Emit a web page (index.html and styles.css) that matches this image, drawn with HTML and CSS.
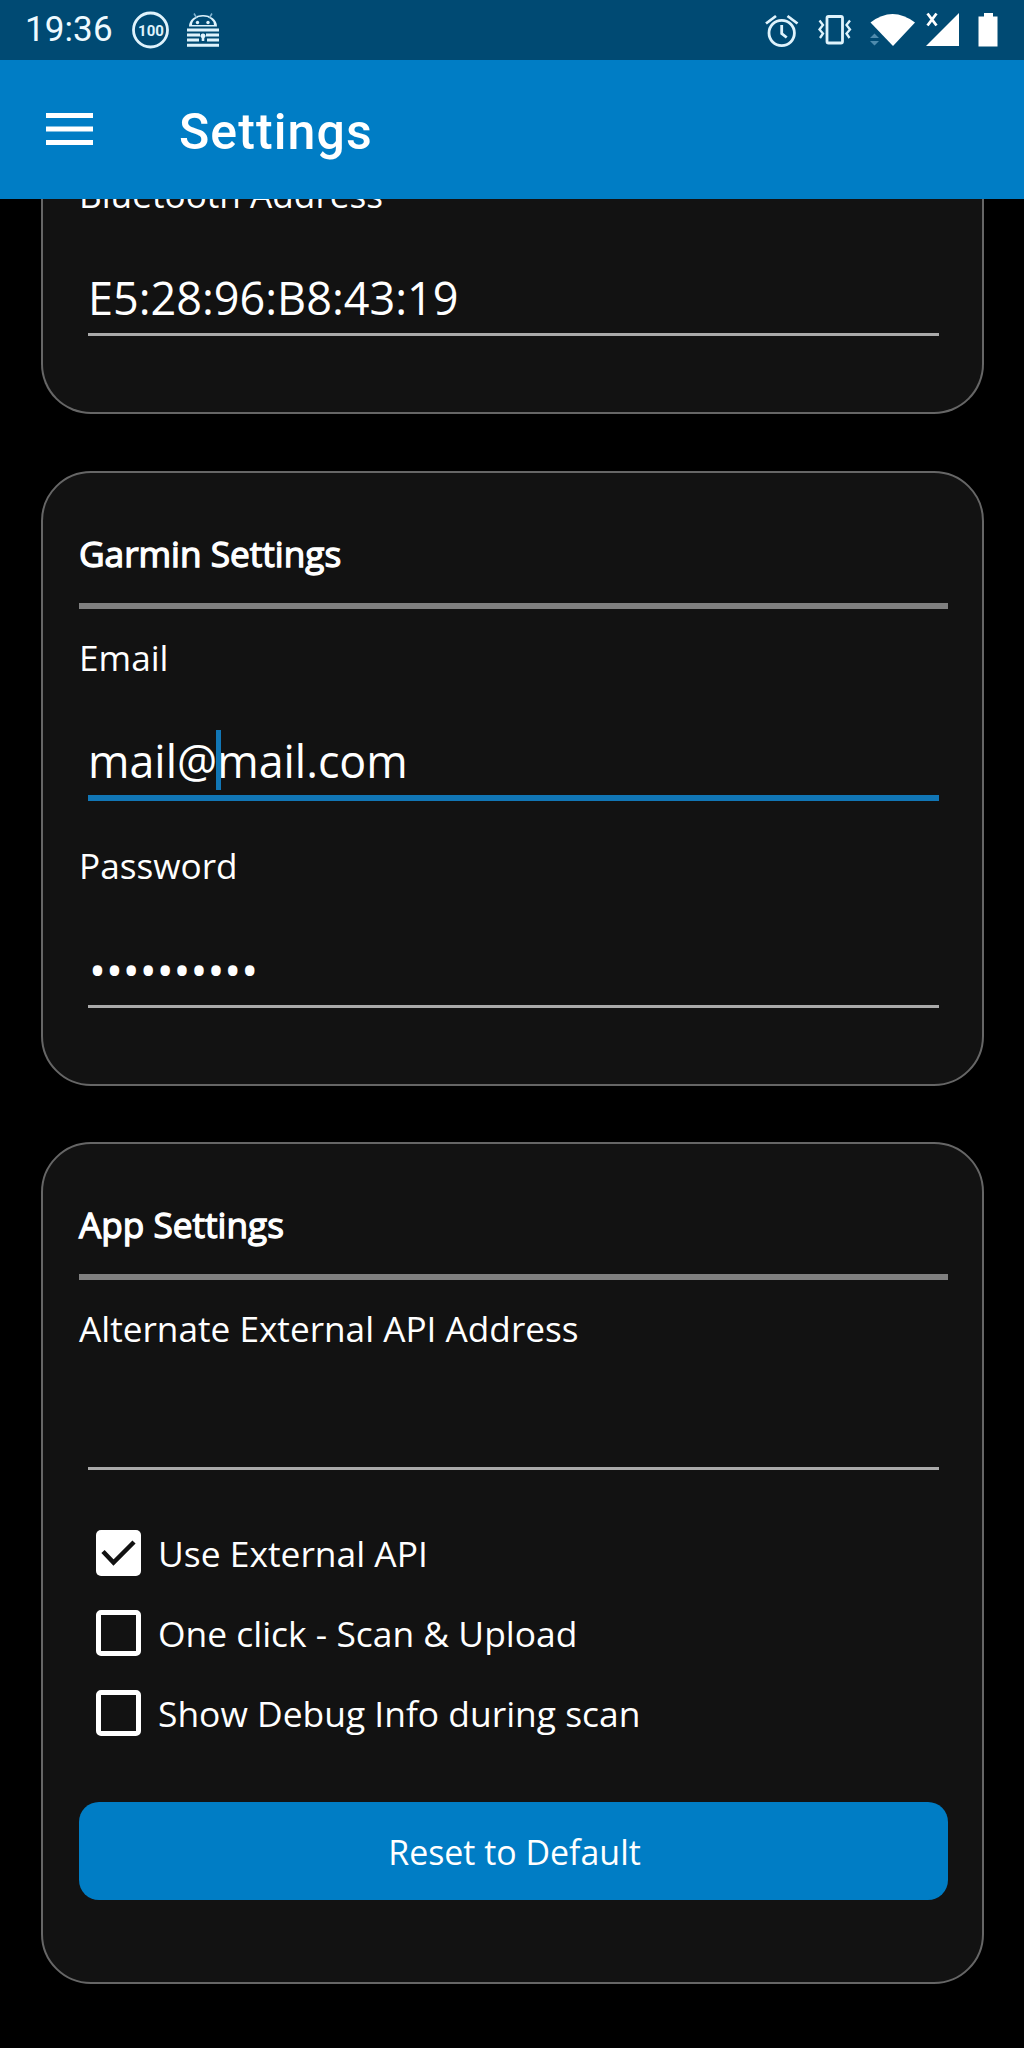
FILE: index.html
```html
<!DOCTYPE html>
<html lang="en">
<head>
<meta charset="utf-8">
<title>Settings</title>
<link rel="stylesheet" href="styles.css">
</head>
<body>
<div class="statusbar">
  <span class="clock">19:36</span>
  <svg class="status-left" width="100" height="60" viewBox="125 0 100 60">
    <circle cx="150.500" cy="30" r="17" fill="none" stroke="#dff3fc" stroke-width="2.800"/>
    <text class="level" x="151" y="35.500" text-anchor="middle">100</text>
    <g fill="#dff3fc">
      <path fill-rule="evenodd" d="M189 26.500a14 11.500 0 0 1 28 0zM192 25h22a11 8.500 0 0 0-22 0z"/>
      <circle cx="197.500" cy="22.500" r="1.700"/><circle cx="208" cy="22.500" r="1.700"/>
      <path d="M187 28.500h32v3h-32zM187 33.500h13v3h-13zM206 33.500h13v3h-13zM187 38.500h12v3h-12zM207 38.500h12v3h-12zM187 43.700h32v3h-32z"/>
      <path d="M203 33.500a2.400 2.400 0 0 1 1.300 4.500v3h-2.600v-3a2.400 2.400 0 0 1 1.300-4.500z"/>
    </g>
    <path d="M194 13.500l2.500 4M212 13.500l-2.500 4" stroke="#7fb2cf" stroke-width="1.500"/>
  </svg>
  <svg class="status-right" width="264" height="60" viewBox="760 0 264 60">
    <g fill="none" stroke="#dff3fc" stroke-width="2.800">
      <circle cx="781.700" cy="33" r="12.700"/>
      <path d="M781.700 25v8.500l5 4M766 23.500l10-7.500M797.500 23.500l-10-7.500"/>
      <rect x="827" y="16.500" width="15.500" height="26.500" rx="1.500"/>
      <path d="M819.500 20.500l3.500 4.500-3.500 4.500 3.500 4-3 4.500M850 20.500l-3.500 4.500 3.500 4.500-3.500 4 3 4.500" stroke-width="2.300"/>
    </g>
    <path fill="#fff" d="M870.500 22.500q22-17 44.500 0l-22 23.500z"/>
    <path fill="#4f8bad" d="M870 38l4.500-4.500 4.500 4.500zM870 41h9l-4.500 4.500z"/>
    <path fill="#fff" d="M959 13v33h-33z"/>
    <path d="M927.500 13.500l9 12M936.500 13.500l-9 12" stroke="#fff" stroke-width="2.800"/>
    <path fill="#fff" d="M984 13h9v3.500h4.500v30h-19v-30h5.500z"/>
  </svg>
</div>
<header class="toolbar">
  <svg class="menu" width="47" height="33" viewBox="0 0 47 33"><path fill="#fff" d="M0 0h47v5H0zM0 13.500h47v5H0zM0 27h47v5H0z"/></svg>
  <h1>Settings</h1>
</header>
<main>
  <section class="card card-scrolled">
    <div class="label">Bluetooth Address</div>
    <div class="input">E5:28:96:B8:43:19</div>
  </section>
  <section class="card">
    <h2>Garmin Settings</h2>
    <hr>
    <div class="label">Email</div>
    <div class="input focused">mail@<i class="caret"></i>mail.com</div>
    <div class="label next">Password</div>
    <div class="input dots">••••••••••</div>
  </section>
  <section class="card card-app">
    <h2>App Settings</h2>
    <hr>
    <div class="label">Alternate External API Address</div>
    <div class="input"></div>
    <ul>
      <li><svg class="box checked" width="45" height="46"><path d="M7 21.500l10.500 11L38 12" fill="none" stroke="#121212" stroke-width="4.500"/></svg><span>Use External API</span></li>
      <li><span class="box"></span><span>One click - Scan &amp; Upload</span></li>
      <li><span class="box"></span><span>Show Debug Info during scan</span></li>
    </ul>
    <button>Reset to Default</button>
  </section>
</main>
</body>
</html>
```
FILE: styles.css
```css
* { box-sizing: border-box; }
body {
  margin: 0;
  height: 2048px;
  overflow: hidden;
  background: #000;
  color: #fff;
  font-family: "Open Sans", sans-serif;
}
.statusbar {
  position: relative;
  z-index: 1;
  display: flex;
  height: 60px;
  background: #004a73;
  font-family: Roboto, sans-serif;
}
.clock {
  width: 125px;
  padding-left: 25px;
  font-size: 35px;
  line-height: 60px;
  letter-spacing: 0.1px;
  color: #eefaff;
}
.status-right { margin-left: auto; }
.level { font: bold 15px Roboto, sans-serif; fill: #dff3fc; }
.toolbar {
  position: relative;
  z-index: 1;
  display: flex;
  align-items: flex-start;
  height: 139px;
  padding-left: 46px;
  background: #007dc5;
}
.menu { margin-top: 53px; }
h1 {
  margin: 42px 0 0 86px;
  font: 500 50px/60px Roboto, sans-serif;
  letter-spacing: 1.1px;
}
.card {
  width: 943px;
  margin: 0 0 57px 41px;
  padding: 56px 34px 76px 36px;
  background: #121212;
  border: 2px solid #666;
  border-radius: 50px;
}
.card-scrolled {
  margin-top: -29px;
  padding-top: 0;
  border-top: 0;
  border-radius: 0 0 50px 50px;
}
.card-app { margin-top: -1px; padding-bottom: 82px; }
h2 {
  margin: 0;
  font-size: 35.2px;
  font-weight: 400;
  line-height: 48px;
  -webkit-text-stroke: 1.3px #fff;
}
hr {
  height: 6px;
  margin: 26px 0 24px;
  border: 0;
  background: #808080;
}
.label {
  font-size: 35.2px;
  line-height: 48px;
  white-space: nowrap;
}
.next { margin-top: 40px; }
.input {
  height: 69px;
  margin: 49px 9px 0;
  padding-top: 2px;
  border-bottom: 3px solid #aaa;
  font-size: 45px;
  line-height: 58px;
  white-space: nowrap;
}
.focused {
  height: 72px;
  margin-top: 48px;
  padding-top: 3px;
  border-bottom: 6px solid #1176b5;
  font-size: 44.8px;
}
.dots { margin-top: 50px; padding-left: 1px; }
.caret {
  position: absolute;
  width: 5px;
  height: 60px;
  margin: -2px 0 0 -1px;
  background: #1176b5;
}
ul { margin: 43px 0 49px; padding: 0 0 0 17px; list-style: none; }
li {
  display: flex;
  align-items: center;
  gap: 17px;
  height: 80px;
  font-size: 35.4px;
  line-height: 48px;
}
.box { width: 45px; height: 46px; border: 5px solid #fff; border-radius: 5px; }
.checked { border: 0; background: #fff; }
button {
  display: block;
  width: 100%;
  height: 98px;
  padding: 2px 0 0 2px;
  border: 0;
  border-radius: 20px;
  background: #007dc5;
  color: #fff;
  font: 33.9px/48px "Open Sans", sans-serif;
}
```
